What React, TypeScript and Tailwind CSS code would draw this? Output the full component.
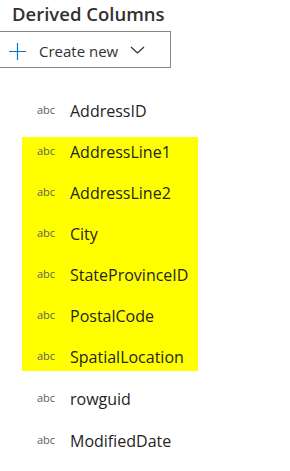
const columns = [
  { name: "AddressID", highlighted: false },
  { name: "AddressLine1", highlighted: true },
  { name: "AddressLine2", highlighted: true },
  { name: "City", highlighted: true },
  { name: "StateProvinceID", highlighted: true },
  { name: "PostalCode", highlighted: true },
  { name: "SpatialLocation", highlighted: true },
  { name: "rowguid", highlighted: false },
  { name: "ModifiedDate", highlighted: false },
];

function ColumnRow({ name }: { name: string }) {
  return (
    <div className="flex h-[29px] items-center">
      <span className="w-[70px] pl-[37px] text-[11px] text-[#605e5c]">abc</span>
      <span className="text-[16px] text-[#252423]">{name}</span>
    </div>
  );
}

export default function App() {
  const first = columns.slice(0, 1);
  const marked = columns.filter((c) => c.highlighted);
  const rest = columns.slice(7);

  return (
    <div className="h-[471px] w-[290px] overflow-hidden bg-white font-['Open_Sans',sans-serif]">
      <h2 className="pl-[12px] pt-[1px] text-[18.5px] font-semibold leading-[26px] text-[#323130]">
        Derived Columns
      </h2>
      <button
        type="button"
        className="-ml-px mt-[4px] flex h-[37px] w-[172px] items-center border border-[#8a8886] bg-white"
      >
        <svg width="19" height="19" viewBox="0 0 19 19" className="ml-[8px] mt-[4px]">
          <path d="M9.5 1v17M1 9.5h17" stroke="#0078d4" strokeWidth="1.2" fill="none" />
        </svg>
        <span className="ml-[12px] mt-[3px] text-[15px] text-[#323130]">Create new</span>
        <svg width="15" height="8" viewBox="0 0 15 8" className="ml-[12px]">
          <path d="M1 1l6.5 6L14 1" stroke="#323130" strokeWidth="1.2" fill="none" />
        </svg>
      </button>

      <div className="mt-[28px] flex flex-col gap-[12px]">
        {first.map((c) => (
          <ColumnRow key={c.name} name={c.name} />
        ))}
        <div className="ml-[22px] flex w-[176px] flex-col gap-[12px] bg-[#ffff00]">
          {marked.map((c) => (
            <div key={c.name} className="-ml-[22px]">
              <ColumnRow name={c.name} />
            </div>
          ))}
        </div>
        <div className="mt-px flex flex-col gap-[13px]">
          {rest.map((c) => (
            <ColumnRow key={c.name} name={c.name} />
          ))}
        </div>
      </div>
    </div>
  );
}
